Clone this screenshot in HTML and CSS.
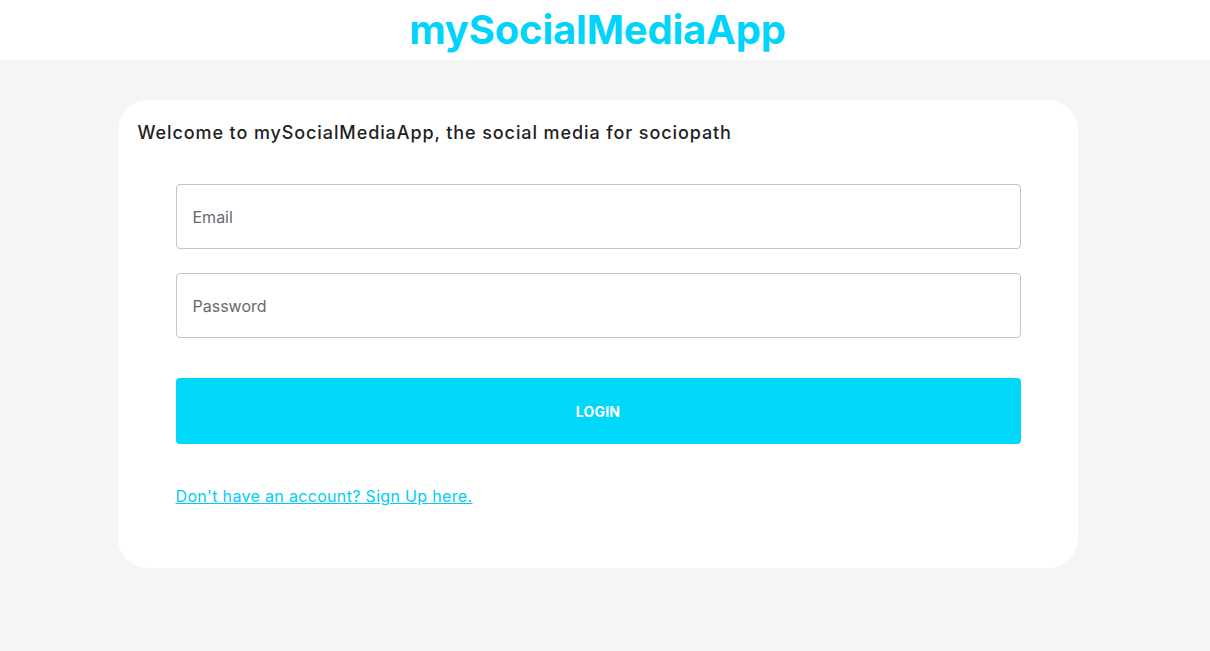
FILE: index.html
```html
<!DOCTYPE html>
<html>
<head>
<meta charset="utf-8">
<link rel="stylesheet" href="styles.css">
</head>
<body>
<header class="topbar"><h1 class="brand">mySocialMediaApp</h1></header>
<main class="page">
  <section class="card">
    <h2 class="welcome">Welcome to mySocialMediaApp, the social media for sociopath</h2>
    <form class="form">
      <input class="field" type="text" placeholder="Email">
      <input class="field" type="password" placeholder="Password">
      <button class="login" type="button">LOGIN</button>
      <a class="signup" href="#">Don't have an account? Sign Up here.</a>
    </form>
  </section>
</main>
</body>
</html>
```
FILE: styles.css
```css
* { box-sizing: border-box; }
html, body { margin: 0; padding: 0; }
body {
  font-family: Inter, "Noto Sans", sans-serif;
  background: #f5f5f5;
  min-height: 651px;
}
.topbar {
  background: #fff;
  height: 60px;
  display: flex;
  justify-content: center;
  align-items: center;
  padding-right: 15px;
}
.brand {
  margin: 0;
  font-size: 40px;
  font-weight: 700;
  color: #00d4fa;
  letter-spacing: -0.2px;
  line-height: 60px;
}
.page {
  display: flex;
  justify-content: center;
  padding-top: 40px;
  padding-right: 15px;
}
.card {
  width: 960px;
  height: 468px;
  background: #fff;
  border-radius: 30px;
  padding: 22px 20px 0 20px;
}
.welcome {
  margin: 0;
  font-size: 18px;
  font-weight: 500;
  color: #1f1f1f;
  line-height: 22px;
  letter-spacing: 0.9px;
}
.form {
  display: flex;
  flex-direction: column;
  margin: 40px 37px 0 38px;
}
.field {
  height: 65px;
  border: 1px solid #c4c4c4;
  border-radius: 4px;
  padding: 0 16px;
  font-family: inherit;
  font-size: 16px;
  color: #333;
  margin-bottom: 24px;
  outline: none;
}
.field::placeholder { color: #666a70; }
.login {
  margin-top: 16px;
  height: 66px;
  border: none;
  border-radius: 4px;
  background: #00d8fa;
  color: #fff;
  font-family: inherit;
  font-weight: 700;
  font-size: 14px;
  letter-spacing: 0.2px;
}
.signup {
  margin-top: 42px;
  align-self: flex-start;
  color: #00cdf5;
  font-size: 16px;
  line-height: 20px;
  letter-spacing: 0.33px;
}
```
